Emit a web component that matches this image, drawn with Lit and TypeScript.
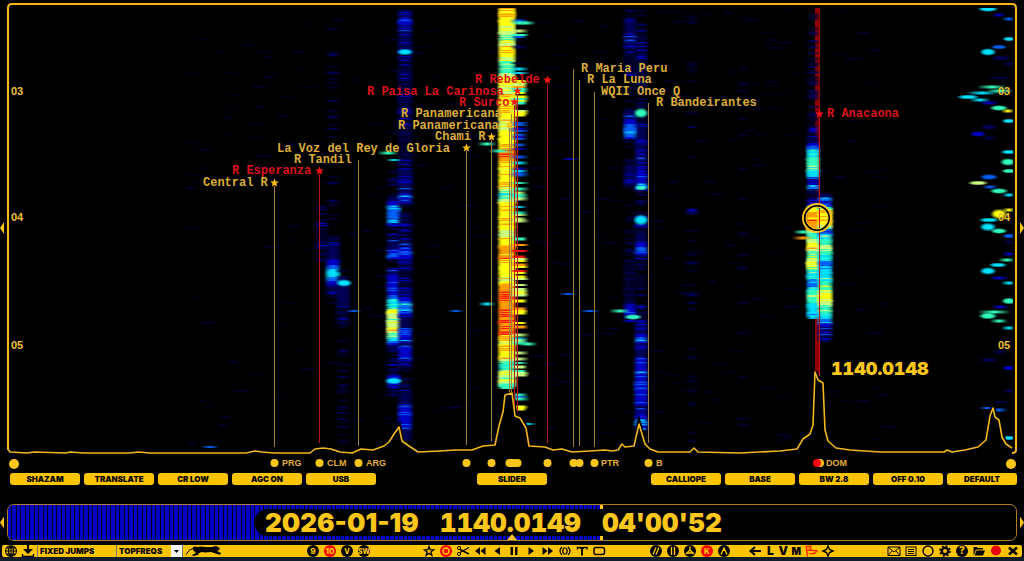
import { LitElement, html, svg, css } from 'lit';
import { customElement, state } from 'lit/decorators.js';

type Key = [y: number, level: number];
interface Track { x: number; w: number; noise: number; density: number; keys: Key[]; }

const RAMP = ['#000018', '#00002c', '#000058', '#0000c8', '#0060f8', '#00e0ff', '#30ffc0', '#c8ff80', '#ffff10', '#ff9c00', '#ff1408'];

// Signal strength along each vertical trace, 0 (noise floor) to 10 (peak).
const TRACKS: Track[] = [
  { x: 333, w: 18, noise: 1, density: 0.2, keys: [[8, 1.6], [150, 1.2], [230, 1.8], [256, 3], [270, 5.4], [278, 5], [290, 2.2], [310, 0]] },
  { x: 322, w: 16, noise: 1, density: 0.45, keys: [[205, 1], [225, 2.4], [245, 2.2], [265, 1]] },
  { x: 343, w: 18, noise: 1, density: 0.45, keys: [[270, 1], [290, 3], [310, 2.2], [330, 1.2], [446, 0.8]] },
  { x: 394, w: 18, noise: 1.2, density: 0.6, keys: [[150, 0.6], [190, 1.4], [208, 4.6], [222, 4.6], [226, 1.6], [248, 3], [255, 5.4], [262, 1], [276, 4], [292, 4], [306, 6], [312, 8.3], [320, 7], [330, 7.6], [342, 5], [350, 1.8], [372, 2], [381, 5.6], [388, 1.6], [400, 0]] },
  { x: 405, w: 18, noise: 0.9, density: 0.65, keys: [[10, 2], [20, 4.2], [28, 3], [60, 2.3], [150, 2.2], [190, 2.8], [196, 4], [204, 2], [240, 2], [252, 4.6], [264, 2.5], [290, 2.2], [304, 5], [310, 4.6], [320, 2], [335, 4.6], [345, 3], [350, 4], [366, 3], [372, 1.4], [395, 2.2], [412, 4], [426, 3.5], [440, 3]] },
  { x: 507, w: 20, noise: 0.9, density: 0.8, keys: [[8, 8.5], [16, 9], [28, 8], [38, 6.5], [44, 7.6], [52, 9], [62, 7], [72, 6.4], [78, 8.8], [90, 7.4], [102, 8.8], [110, 9], [124, 7.6], [145, 9], [160, 9.3], [170, 8], [185, 9], [195, 5.6], [205, 8.6], [220, 8.4], [235, 8], [250, 9.4], [270, 8.4], [280, 8], [290, 10], [330, 10], [342, 8], [355, 8.6], [366, 6], [374, 7.5], [388, 7]] },
  { x: 519, w: 20, noise: 1.6, density: 0.55, keys: [[20, 5], [34, 7], [38, 0.5], [64, 0.5], [70, 6], [80, 8], [100, 7], [112, 9], [120, 6], [130, 3], [160, 4], [200, 6.5], [230, 7], [250, 9], [290, 8], [325, 9.6], [335, 6], [352, 6], [365, 7], [382, 9], [395, 5.5], [410, 8.5]] },
  { x: 641, w: 16, noise: 0.9, density: 0.5, keys: [[10, 1.6], [50, 2.4], [100, 1.6], [140, 2.8], [152, 3.2], [170, 3.4], [186, 4.6], [192, 1.6], [240, 2.6], [250, 5], [258, 2.2], [290, 1.2], [335, 3], [339, 5], [345, 3], [368, 4], [412, 3.4], [420, 4.6], [430, 4]] },
  { x: 630, w: 16, noise: 1, density: 0.4, keys: [[10, 1.6], [25, 3], [100, 1.4], [116, 3], [128, 5], [137, 4.5], [142, 0.8], [166, 2.6], [184, 3], [190, 1], [250, 1], [262, 2.4], [300, 2.4], [312, 4.4], [322, 2], [330, 0]] },
  { x: 692, w: 16, noise: 0.7, density: 0.22, keys: [[10, 0.9], [200, 1.2], [212, 2], [225, 2], [240, 1], [446, 0.7]] },
  { x: 743, w: 16, noise: 0.5, density: 0.15, keys: [[10, 0.8], [446, 0.8]] },
  { x: 813, w: 16, noise: 1.1, density: 0.7, keys: [[14, 0.6], [100, 1.2], [136, 2], [145, 4], [152, 5.4], [160, 6.4], [176, 5.6], [181, 2.6], [187, 5.6], [191, 2], [203, 3], [208, 9], [228, 9.4], [234, 6], [244, 8.6], [254, 6.5], [264, 7.8], [272, 6], [284, 4.6], [296, 7.4], [306, 5.6], [318, 5]] },
  { x: 825, w: 18, noise: 1.3, density: 0.6, keys: [[192, 1.5], [200, 4.6], [205, 4], [210, 9], [224, 9], [230, 4], [246, 7.4], [256, 6], [262, 4.8], [280, 6], [290, 7], [294, 9], [300, 8], [308, 6.6], [318, 5.4], [326, 3.6], [338, 2.4], [345, 1]] },
];

// Isolated bursts: x, y, width, height, level
const BURSTS: number[][] = [
  [405, 52, 18, 6, 5], [641, 113, 16, 10, 6], [641, 220, 17, 11, 5], [641, 188, 14, 4, 6], [344, 283, 18, 7, 5], [394, 381, 16, 6, 5],
  [388, 153, 22, 3, 6], [394, 160, 16, 2, 5], [487, 144, 20, 3, 6], [500, 151, 24, 3, 6], [487, 304, 18, 3, 5], [528, 344, 20, 3, 6],
  [620, 311, 22, 3, 6], [456, 311, 16, 2, 4], [590, 311, 20, 2, 4], [568, 294, 18, 2, 4], [526, 23, 20, 3, 6], [528, 424, 16, 2, 5],
  [570, 159, 20, 2, 3], [210, 447, 18, 2, 4], [354, 311, 16, 2, 4], [803, 238, 22, 3, 9], [803, 232, 20, 3, 6], [633, 317, 20, 5, 6],
  [988, 9, 22, 5, 5], [999, 15, 14, 3, 3], [1009, 19, 14, 3, 4], [1009, 39, 14, 4, 5], [999, 47, 18, 4, 4], [988, 52, 18, 7, 5],
  [1001, 58, 22, 4, 2], [1009, 64, 14, 3, 2], [1000, 78, 30, 2, 2], [992, 87, 30, 3, 6], [1000, 91, 28, 3, 6], [982, 93, 32, 3, 5],
  [968, 97, 24, 4, 5], [980, 100, 22, 3, 5], [989, 103, 20, 3, 3], [999, 108, 20, 5, 6], [1008, 111, 14, 3, 8], [1009, 121, 16, 4, 5],
  [989, 127, 18, 5, 2], [978, 134, 18, 5, 3], [989, 138, 16, 3, 2], [1009, 152, 18, 4, 5], [1008, 162, 17, 7, 6], [1009, 171, 16, 4, 6],
  [989, 177, 20, 5, 4], [978, 183, 22, 4, 7], [990, 187, 16, 3, 4], [999, 191, 20, 5, 6], [1009, 195, 14, 3, 5], [1009, 210, 14, 3, 8],
  [999, 214, 18, 10, 8], [989, 220, 22, 4, 5], [988, 227, 18, 8, 5], [999, 231, 18, 5, 6], [1009, 236, 14, 4, 4], [1009, 242, 12, 3, 2],
  [1009, 254, 14, 3, 3], [1007, 260, 18, 3, 6], [998, 265, 20, 4, 5], [988, 271, 18, 7, 5], [999, 278, 20, 3, 3], [1009, 283, 16, 3, 5],
  [1009, 301, 16, 6, 6], [1000, 307, 18, 3, 3], [994, 312, 34, 3, 6], [988, 316, 20, 6, 6], [999, 321, 18, 3, 6], [1009, 328, 16, 3, 5],
  [999, 352, 16, 3, 2], [989, 360, 18, 4, 2], [1009, 368, 16, 4, 3], [1009, 391, 14, 3, 2], [987, 408, 16, 2, 4], [999, 410, 18, 3, 4],
  [1009, 438, 14, 4, 5], [1000, 402, 18, 2, 2],
];

const SPECTRUM = '8,449 10,452 27,453 34,452 66,453 70,452 84,453 130,453 138,452 150,453 200,453 246,453 255,451 262,452 274,453 310,453 315,449 323,448 331,449 340,452 352,453 361,449 373,450 384,446 389,442 394,434 399,427 402,441 409,446 418,452 440,451 455,450 472,450 483,446 495,445 499,426 503,412 505,395 512,393 515,416 520,418 526,428 529,446 545,447 553,450 562,449 572,452 590,451 605,450 612,451 618,450 622,444 625,447 634,446 639,424 645,444 650,449 658,452 690,452 694,448 698,452 740,453 780,451 797,449 803,439 810,434 813,425 815,372 818,380 823,383 825,430 828,441 836,448 850,450 880,452 944,452 947,450 952,452 965,450 978,447 986,440 990,416 993,408 995,417 999,420 1002,437 1006,444 1012,448';

// name, text x, baseline, marker x, star y (0: none), line top, line bottom, alert
const STATIONS: [string, number, number, number, number, number, number, boolean][] = [
  ['R Maria Peru', 581, 72, 573, 0, 69, 447, false],
  ['R La Luna', 587, 83, 579, 0, 80, 446, false],
  ['WQII Once Q', 601, 95, 594, 0, 92, 447, false],
  ['R Bandeirantes', 656, 106, 648, 0, 103, 443, false],
  ['R Anacaona', 827, 117, 819, 114, 117, 376, true],
  ['R Rebelde', 475, 83, 547, 80, 83, 443, true],
  ['R Paisa La Carinosa', 367, 95, 517, 91, 94, 412, true],
  ['R Surco', 459, 106, 514, 102, 105, 412, true],
  ['R Panamericana', 401, 117, 511, 0, 114, 392, false],
  ['R Panamericana', 398, 129, 509, 125, 128, 392, false],
  ['Chami R', 435, 140, 491, 137, 140, 441, false],
  ['La Voz del Rey de Gloria', 277, 152, 466, 148, 151, 445, false],
  ['R Tandil', 294, 163, 358, 0, 160, 446, false],
  ['R Esperanza', 232, 174, 319, 171, 174, 443, true],
  ['Central R', 203, 186, 274, 183, 186, 447, false],
];

const DOTS = [274, 319, 358, 466, 491, 509, 511, 514, 517, 547, 573, 579, 594, 648];

function makeRandom(seed: number) {
  let s = seed;
  return () => {
    s = (s * 1664525 + 1013904223) >>> 0;
    return s / 4294967296;
  };
}

function levelAt(keys: Key[], y: number): number {
  for (let i = 1; i < keys.length; i++) {
    const [y0, a] = keys[i - 1];
    const [y1, b] = keys[i];
    if (y <= y1) return a + ((b - a) * (y - y0)) / (y1 - y0);
  }
  return 0;
}

function streak(x: number, y: number, w: number, h: number, level: number, soft = true) {
  const n = Math.max(0, Math.min(10, Math.round(level)));
  return svg`<rect x=${x - w / 2} y=${y - h / 2} width=${w} height=${h} fill=${`url(#${soft ? 'g' : 'h'}${n})`}></rect>`;
}

function waterfall() {
  const rnd = makeRandom(77);
  const out: unknown[] = [];
  for (let i = 0; i < 360; i++) {
    const x = 190 + rnd() * 700;
    out.push(streak(x, Math.round(10 + rnd() * 434), 12 + rnd() * 14, 1, rnd() > 0.7 ? 2 : 1));
  }
  for (const t of TRACKS) {
    const end = t.keys[t.keys.length - 1][0];
    for (let y = t.keys[0][0]; y < end; y += 2) {
      const base = levelAt(t.keys, y);
      if (base > 2 && t.noise < 1.5) out.push(streak(t.x, y + 1, t.w, 4, base > 5 ? base - 0.6 : base - 1, base < 7));
      if (rnd() > t.density) continue;
      const level = base + (rnd() - 0.5) * 2 * t.noise;
      if (level < 0.6) continue;
      out.push(streak(t.x, y + 1, t.w + (rnd() - 0.5) * 6, rnd() > 0.5 ? 3 : 2, level, base < 7));
    }
  }
  for (const [x, y, w, h, level] of BURSTS) {
    out.push(h > 3
      ? svg`<ellipse cx=${x} cy=${y} rx=${w / 2} ry=${h / 2 + 0.5} fill=${`url(#r${level})`}></ellipse>`
      : streak(x, y, w, h, level));
  }
  return out;
}

function star(x: number, y: number, alert: boolean) {
  const pts = Array.from({ length: 10 }, (_, i) => {
    const r = i % 2 ? 2 : 4.5;
    const a = (i * Math.PI) / 5 - Math.PI / 2;
    return `${(x + 0.5 + r * Math.cos(a)).toFixed(1)},${(y + r * Math.sin(a)).toFixed(1)}`;
  }).join(' ');
  return svg`<polygon points=${pts} class=${alert ? 'star alert' : 'star'}></polygon>`;
}

@customElement('waterfall-plot')
export class WaterfallPlot extends LitElement {
  static styles = css`
    :host { display: block; }
    .plot { display: block; width: 100%; height: auto; }
    .frame { fill: none; stroke: #f5b618; stroke-width: 2; }
    .shade { fill: #000; stroke: #000; stroke-width: 5; }
    .trace { fill: none; stroke: #f2b71d; stroke-width: 1.6; stroke-linejoin: round; }
    .mark { fill: #a08038; }
    .mark.alert { fill: #b8141c; }
    .tuned { fill: #900004; }
    .star { fill: #ffc20e; }
    .star.alert { fill: #ff1010; }
    .name { font: bold 12px "Liberation Mono", monospace; fill: #dcae38; }
    .name.alert { fill: #dc121a; }
    .hour { font: bold 11px "Liberation Sans", sans-serif; fill: #f0c030; }
    .code { font: bold 9px "Liberation Sans", sans-serif; fill: #e3ae38; }
    .peak { font: 900 18px Inter, sans-serif; font-variant-numeric: tabular-nums; fill: #ffc61a; }
    .gold { fill: #ffc61a; }
    .red { fill: #ff0505; }
    .ring { fill: none; stroke: #ffc61a; stroke-width: 2; }
    .ring-gap { fill: none; stroke: #000; stroke-width: 2; }
    .ring-inner { fill: none; stroke: #ffc61a; stroke-width: 1; }
  `;

  render() {
    return html`
      <svg class="plot" viewBox="0 0 1024 470" role="img" aria-label="Waterfall spectrum">
        <defs>
          ${RAMP.map((c, i) => svg`
            <linearGradient id=${`g${i}`}>
              <stop offset="0" stop-color=${c} stop-opacity="0"></stop>
              <stop offset="0.3" stop-color=${c} stop-opacity="0.65"></stop>
              <stop offset="0.5" stop-color=${c}></stop>
              <stop offset="0.7" stop-color=${c} stop-opacity="0.65"></stop>
              <stop offset="1" stop-color=${c} stop-opacity="0"></stop>
            </linearGradient>
            <linearGradient id=${`h${i}`}>
              <stop offset="0" stop-color=${c} stop-opacity="0"></stop>
              <stop offset="0.3" stop-color=${c}></stop>
              <stop offset="0.7" stop-color=${c}></stop>
              <stop offset="1" stop-color=${c} stop-opacity="0"></stop>
            </linearGradient>
            <radialGradient id=${`r${i}`}>
              <stop offset="0.45" stop-color=${c}></stop>
              <stop offset="1" stop-color=${c} stop-opacity="0"></stop>
            </radialGradient>`)}
          <clipPath id="area"><rect x="10" y="8" width="1003" height="444"></rect></clipPath>
        </defs>
        <g clip-path="url(#area)">
          <rect class="tuned" x="815" y="8" width="5" height="368"></rect>
          ${waterfall()}
          <polyline class="shade" points=${SPECTRUM}></polyline>
        </g>
        ${STATIONS.map(([, , , x, , top, bottom, alert]) => svg`
          <rect class=${alert ? 'mark alert' : 'mark'} x=${x} y=${top} width="1" height=${bottom - top}></rect>`)}
        <polyline class="trace" points=${SPECTRUM}></polyline>
        <path class="frame" d="M8 450V8q0-4 4-4H1012q4 0 4 4V450q0 3-4 3"></path>
        ${STATIONS.map(([, , , x, y, , , alert]) => (y ? star(x, y, alert) : null))}
        ${STATIONS.map(([name, x, y, , , , , alert]) => svg`<text class=${alert ? 'name alert' : 'name'} x=${x} y=${y}>${name}</text>`)}
        ${['03', '04', '05'].map((h, i) => svg`
          <text class="hour" x="11" y=${[95, 221, 349][i]}>${h}</text>
          <text class="hour" x="998" y=${[95, 221, 349][i]}>${h}</text>`)}
        <circle class="ring" cx="817" cy="218" r="14"></circle>
        <circle class="ring-gap" cx="817" cy="218" r="12"></circle>
        <circle class="ring-inner" cx="817" cy="218" r="11"></circle>
        <text class="peak" x="831" y="375">1140.0148</text>
        <polygon class="gold" points="0,228 4,222 4,234"></polygon>
        <polygon class="gold" points="1024,228 1020,222 1020,234"></polygon>
        <circle class="gold" cx="14" cy="464" r="5"></circle>
        <circle class="gold" cx="1011" cy="464" r="5"></circle>
        ${DOTS.map((x) => svg`<circle class="gold" cx=${x + 0.5} cy="463" r="4"></circle>`)}
        <circle class="gold" cx="820" cy="463" r="4"></circle>
        <circle class="red" cx="817" cy="463" r="4"></circle>
        ${([['PRG', 282], ['CLM', 327], ['ARG', 366], ['PTR', 601], ['B', 656], ['DOM', 826]] as [string, number][]).map(
          ([t, x]) => svg`<text class="code" x=${x} y="466">${t}</text>`)}
      </svg>`;
  }
}

const ln = (d: string, w = 1.5) => svg`<path d=${d} fill="none" stroke="currentColor" stroke-width=${w}></path>`;
const fl = (d: string) => svg`<path d=${d} fill="currentColor"></path>`;
const disc = (d: unknown) => svg`<circle cx="8" cy="6" r="6" fill="#000"></circle>${d}`;
const glyph = (t: string, bg = '#000', size = 8) => svg`<circle cx="8" cy="6" r="6" fill=${bg}></circle><text x="8" y="9" text-anchor="middle" font-size=${size} font-weight="800" font-family="Inter, sans-serif" fill="#fc0">${t}</text>`;

const ICONS: Record<string, unknown> = {
  globe: ln('M8 .5a5.5 5.5 0 1 0 0 11a5.5 5.5 0 1 0 0-11M8 .5C4.500 3 4.500 9 8 11.500C11.500 9 11.500 3 8 .5M8 0V12M2.500 6H13.500M3.500 3H12.500M3.500 9H12.500', 1.1),
  download: svg`${fl('M7 0H9V4H13L8 9L3 4H7Z')}${ln('M2.500 9V11.500H13.500V9', 1.4)}`,
  star: ln('M8 1.500L9.200 4.700L12.600 4.800L9.900 6.900L10.900 10.300L8 8.300L5.100 10.300L6.100 6.900L3.400 4.800L6.800 4.700Z', 1.3),
  target: svg`<circle cx="8" cy="6" r="6" fill="#f00"></circle><circle cx="8" cy="6" r="3" fill="#f00" stroke="#fc0" stroke-width="1.4"></circle>`,
  scissors: svg`${ln('M5 4.500L14 9M5 7.500L14 2.500', 1.4)}<circle cx="4" cy="3" r="1.600" fill="none" stroke="#000"></circle><circle cx="4" cy="9" r="1.600" fill="none" stroke="#000"></circle>`,
  rewind: fl('M8 2V10L3 6ZM13.500 2V10L8.500 6Z'),
  back: fl('M11 2V10L5.500 6Z'),
  pause: fl('M4.500 2H7V10H4.500ZM9 2H11.500V10H9Z'),
  play: fl('M5.500 2V10L11 6Z'),
  forward: fl('M2.500 2V10L7.500 6ZM8 2V10L13 6Z'),
  waves: ln('M5 2Q1 6 5 10M7.500 2.500Q4 6 7.500 9.500M8.500 2.500Q12 6 8.500 9.500M11 2Q15 6 11 10', 1.2),
  antenna: svg`${ln('M3.500 4.500V2.500H7M9 2.500H13V4.500', 1.5)}${ln('M8 2V10.500', 2)}${ln('M5.500 2.500L8 5L10.500 2.500', 1)}`,
  box: svg`<rect x="3" y="2.500" width="10.500" height="7" rx="2" fill="none" stroke="#000" stroke-width="1.5"></rect>`,
  slashes: disc(svg`<path d="M5 9.500L8 2.500M8 9.500L11 2.500" stroke="#fc0" stroke-width="1.3"></path>`),
  bars: disc(svg`<path d="M6.500 2V10M9.500 2V10" stroke="#fc0" stroke-width="1.3"></path>`),
  peak: disc(svg`<path d="M8 1.500V6M8 5L4 9M8 5L12 9M5 8H11" fill="none" stroke="#fc0" stroke-width="1.3"></path>`),
  kilo: glyph('K', '#f00', 8),
  caret: disc(svg`<path d="M5 9.500L8 3L11 9.500M8 3V6" fill="none" stroke="#fc0" stroke-width="1.3"></path>`),
  arrow: ln('M14 6H4M8 2L3.500 6L8 10', 2),
  flag: svg`<path d="M3 1L4.500 11.500M3 1.500H8L7 5L14 6Q11 10 6 8.500M4 5.500L8 5" fill="none" stroke="#f20" stroke-width="1.300"></path>`,
  compass: ln('M8 1L9.500 4.500L13 6L9.500 7.500L8 11L6.500 7.500L3 6L6.500 4.500Z', 1.4),
  mail: ln('M2 2H14V10.500H2ZM2 2L8 7L14 2M2 10.500L6 6M14 10.500L10 6', 1),
  list: svg`<rect x="3" y="2" width="10" height="8.500" fill="none" stroke="#000"></rect>${ln('M5 4.500H11M5 6.500H11M5 8.500H11', 1)}`,
  circle: svg`<circle cx="8" cy="6" r="5" fill="none" stroke="#000" stroke-width="1.400"></circle>`,
  gear: svg`<circle cx="8" cy="6" r="3.200" fill="none" stroke="#000" stroke-width="2.400"></circle><circle cx="8" cy="6" r="5" fill="none" stroke="#000" stroke-width="1.600" stroke-dasharray="2 1.930"></circle>`,
  help: glyph('?', '#000', 10),
  folder: svg`${fl('M2.500 2H6L7 3H12V4.500H5L3 9.500L2.500 10Z')}${fl('M5.500 5.500H14L12 10.500H3.500Z')}`,
  record: svg`<circle cx="8" cy="5.500" r="5" fill="#e8000c"></circle>`,
  close: ln('M4 2.500L12 9.500M12 2.500L4 9.500', 2.6),
  nine: glyph('9'), ten: glyph('10', '#f00', 8), vee: glyph('V', '#000', 7), sw: glyph('SW', '#000', 7),
};

@customElement('app-root')
export class AppRoot extends LitElement {
  @state() private set = 'TOPFREQS';

  static styles = css`
    :host { display: flex; flex-direction: column; min-height: 100vh; background: #000; color: #ffc61a; font-family: Inter, "Liberation Sans", sans-serif; }
    button, input, select { font: inherit; color: #000; border: 0; margin: 0; padding: 0; border-radius: 0; }
    button { background: none; cursor: pointer; }
    .presets { display: grid; grid-template-columns: repeat(5, 70fr) 93fr 70fr 96fr repeat(5, 70fr); column-gap: 4px; padding: 3px 7px 0 10px; }
    .preset { background: #ffc400; border-radius: 3px; height: 12px; font-size: 8px; font-weight: 900; line-height: 12px; white-space: nowrap; }
    .preset:nth-child(6) { grid-column: 7; }
    .preset:nth-child(7) { grid-column: 9; }
    .timeline { display: grid; grid-template-columns: 4px 1fr 4px; column-gap: 3px; align-items: center; margin-top: 19px; }
    .nudge { width: 4px; height: 12px; background: #ffc61a; clip-path: polygon(0 50%, 100% 0, 100% 100%); }
    .nudge.right { clip-path: polygon(100% 50%, 0 0, 0 100%); }
    .panel { display: grid; box-sizing: border-box; height: 37px; border: 1px solid #b07c28; border-radius: 7px; overflow: hidden; }
    .played, .readout, .cursor { grid-area: 1 / 1; }
    .played { width: 59%; box-sizing: border-box; border-right: 3px solid #ffc61a; background: repeating-linear-gradient(90deg, #0000c4 0 3px, #00001c 3px 4px, #0000c4 4px 8px, #00001c 8px 9px); }
    .readout { margin: 4px 0 4px 24.500%; background: #000; border-radius: 12px 0 0 12px; padding-left: 10px; display: flex; gap: 21px; align-items: center; font-size: 26px; font-weight: 900; line-height: 27px; white-space: nowrap; }
    .value { font-variant-numeric: tabular-nums; }
    .cursor { justify-self: center; align-self: end; width: 10px; height: 6px; background: #ffc61a; clip-path: polygon(50% 0, 100% 100%, 0 100%); }
    .toolbar { display: grid; grid-template-columns: auto 83fr auto 48fr auto 40fr auto 14fr auto 48fr auto; align-items: center; height: 12px; margin: 4px 2px 0; padding-right: 1px; background: #ffc400; border-radius: 2px; }
    .group { display: flex; align-items: center; height: 12px; }
    .group:nth-child(2) { grid-column: 3; }
    .group:nth-child(3) { grid-column: 5; }
    .group:nth-child(4) { grid-column: 7; }
    .group:nth-child(5) { grid-column: 9; }
    .group:nth-child(6) { grid-column: 11; }
    .tool { width: 17px; height: 12px; display: flex; justify-content: center; }
    .letter { width: 13px; height: 12px; font-size: 12px; line-height: 12px; font-weight: 900; }
    .letter.small { font-size: 10px; }
    .icon { width: 16px; height: 12px; overflow: visible; display: block; }
    .jumps { width: 80px; height: 12px; box-sizing: border-box; background: none; border-left: 1px solid #777; border-right: 1px solid #777; padding-left: 2px; font-size: 8px; font-weight: 900; margin-left: 1px; }
    .chooser { display: grid; width: 65px; height: 12px; align-items: center; border-right: 1px solid #777; }
    .freqs, .drop { grid-area: 1 / 1; }
    .freqs { appearance: none; background: none; width: 65px; height: 12px; padding-left: 2px; font-size: 8px; font-weight: 900; }
    .drop { justify-self: end; width: 11px; height: 12px; background: #f4f4f4; pointer-events: none; }
    .panther { width: 36px; height: 12px; display: block; margin-left: 2px; }
    .base { flex: 1; background: #101c28; }
  `;

  private icon(name: string) {
    return html`<svg class="icon" viewBox="0 0 16 12" aria-hidden="true">${ICONS[name]}</svg>`;
  }

  private tools(names: string[]) {
    return names.map((n) => html`<button class="tool" aria-label=${n}>${this.icon(n)}</button>`);
  }

  render() {
    const presets = ['SHAZAM', 'TRANSLATE', 'CR LOW', 'AGC ON', 'USB', 'SLIDER', 'CALLIOPE', 'BASE', 'BW 2.8', 'OFF 0.10', 'DEFAULT'];
    return html`
      <waterfall-plot></waterfall-plot>
      <nav class="presets">${presets.map((p) => html`<button class="preset">${p}</button>`)}</nav>
      <section class="timeline">
        <button class="nudge" aria-label="Earlier"></button>
        <div class="panel">
          <div class="played"></div>
          <div class="readout"><span>2026-01-19</span><span class="value">1140.0149</span><span class="value">04'00'52</span></div>
          <div class="cursor"></div>
        </div>
        <button class="nudge right" aria-label="Later"></button>
      </section>
      <footer class="toolbar">
        <div class="group">
          ${this.tools(['globe', 'download'])}
          <input class="jumps" aria-label="Jumps" .value=${'FIXED JUMPS'} />
          <div class="chooser">
            <select class="freqs" aria-label="Frequency set" @change=${(e: Event) => { this.set = (e.target as HTMLSelectElement).value; }}>
              <option ?selected=${this.set === 'TOPFREQS'}>TOPFREQS</option>
            </select>
            <svg class="drop" viewBox="0 0 11 12" aria-hidden="true"><path d="M3 5H8L5.500 8Z"></path></svg>
          </div>
          <svg class="panther" viewBox="0 0 36 12" aria-hidden="true">
            <path d="M1 9.500Q4 4 9 3" fill="none" stroke="#000"></path>
            <path d="M8 2Q10 1 12 2Q16 1 20 2L27 2L31 1L35 3L34 5L32 6L36 8L35 10L29 8L26 7L20 7.500L17 7L14 8L13 10L8 11L7 10L11 8L8 5Z"></path>
          </svg>
        </div>
        <div class="group">${this.tools(['nine', 'ten', 'vee', 'sw'])}</div>
        <div class="group">${this.tools(['star', 'target', 'scissors', 'rewind', 'back', 'pause', 'play', 'forward', 'waves', 'antenna', 'box'])}</div>
        <div class="group">${this.tools(['slashes', 'bars', 'peak', 'kilo', 'caret'])}</div>
        <div class="group">
          ${this.tools(['arrow'])}
          <button class="letter">L</button><button class="letter">V</button><button class="letter small">M</button>
          ${this.tools(['flag', 'compass'])}
        </div>
        <div class="group">${this.tools(['mail', 'list', 'circle', 'gear', 'help', 'folder', 'record', 'close'])}</div>
      </footer>
      <div class="base"></div>`;
  }
}
